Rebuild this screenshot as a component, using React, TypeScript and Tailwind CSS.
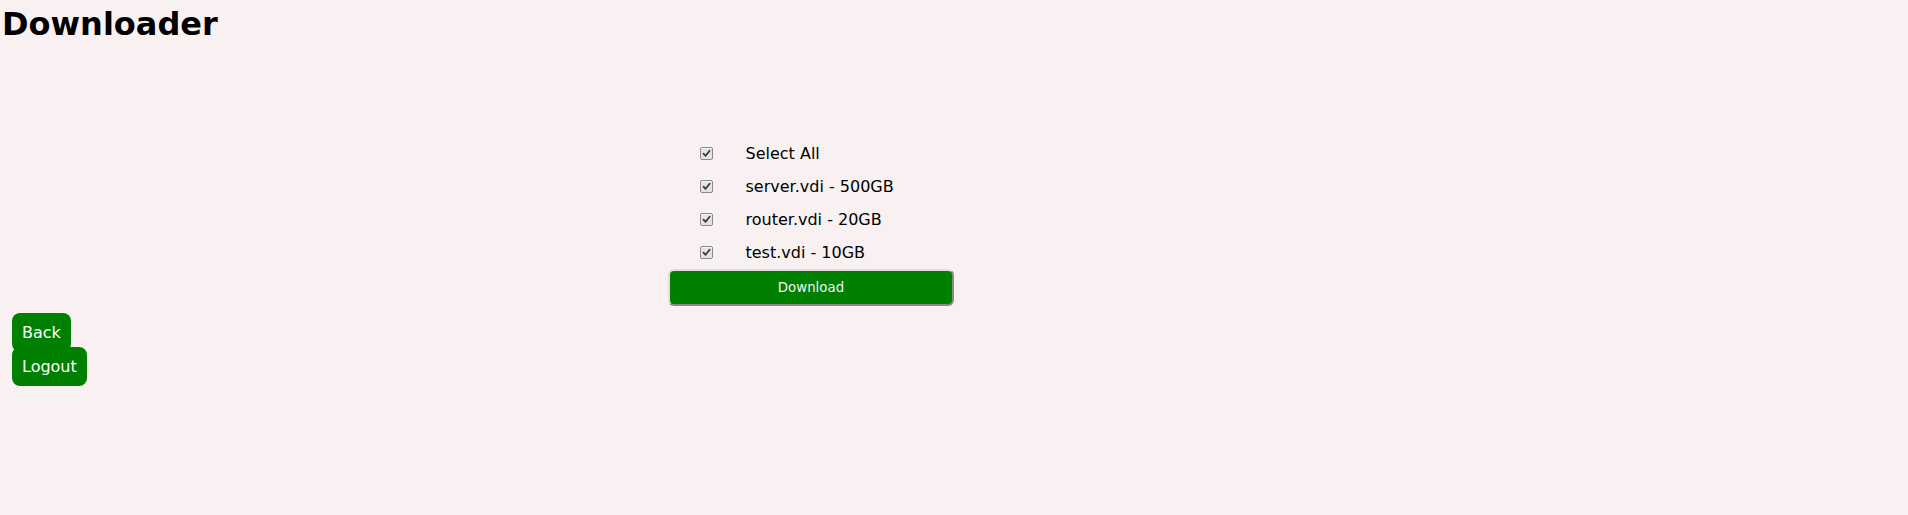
import React, { useState } from "react";

function Check({ checked }: { checked: boolean }) {
  return (
    <span className="inline-flex h-[13px] w-[13px] items-center justify-center rounded-[2px] border border-[#8a8a8a] bg-[#e4e4e4] shadow-[inset_0_1px_0_#f6f6f6]">
      {checked && (
        <svg width="9" height="9" viewBox="0 0 9 9">
          <path d="M1.5 4.6 L3.6 6.8 L7.6 1.8" fill="none" stroke="#3a3a3a" strokeWidth="1.8" strokeLinecap="round" strokeLinejoin="round" />
        </svg>
      )}
    </span>
  );
}

export default function App() {
  const files = ["server.vdi - 500GB", "router.vdi - 20GB", "test.vdi - 10GB"];
  const [sel, setSel] = useState<boolean[]>([true, true, true]);
  const all = sel.every(Boolean);
  const rows = [
    { label: "Select All", checked: all, on: () => setSel(sel.map(() => !all)) },
    ...files.map((f, i) => ({
      label: f,
      checked: sel[i],
      on: () => setSel(sel.map((v, j) => (j === i ? !v : v))),
    })),
  ];
  return (
    <div className="min-h-screen bg-[#f9f0f1] text-black [font-family:'DejaVu_Sans',sans-serif]">
      <h1 className="m-0 pl-[2px] text-[32px] font-bold">Downloader</h1>
      <div className="ml-[668px] mt-[89px] w-[286px]">
        {rows.map((r) => (
          <div key={r.label} className="flex h-[33px] cursor-pointer items-center text-[16px]" onClick={r.on}>
            <span className="ml-[32px] flex w-[45.5px] items-center">
              <Check checked={r.checked} />
            </span>
            <span>{r.label}</span>
          </div>
        ))}
        <button className="flex h-[37px] w-[286px] items-center justify-center rounded-[6px] border-2 border-solid border-t-[#dedede] border-l-[#dedede] border-r-[#8a8a8a] border-b-[#8a8a8a] bg-[#008000] pt-[1px] text-[13.33px] text-[#f2f2f2]">
          Download
        </button>
      </div>
      <div className="ml-[12px] mt-[7px] flex flex-col items-start">
        <button className="flex h-[39px] items-center rounded-[8px] bg-[#008000] px-[10px] text-[16px] text-white">
          Back
        </button>
        <button className="-mt-[5px] flex h-[39px] items-center rounded-[8px] bg-[#008000] px-[10px] text-[16px] text-white">
          Logout
        </button>
      </div>
    </div>
  );
}
